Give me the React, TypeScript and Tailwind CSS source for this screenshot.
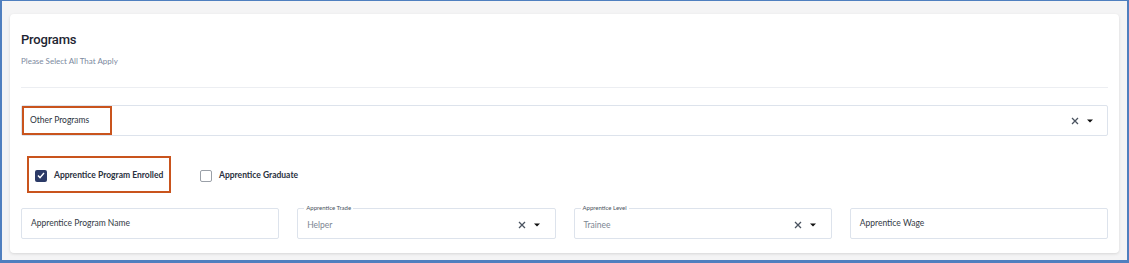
import React from 'react';

const Caret = () => (
  <svg width="6" height="4" viewBox="0 0 6 4" className="fill-[#111]">
    <path d="M0 0.5h6L3 3.5z" />
  </svg>
);

const Clear = () => (
  <svg width="8" height="8" viewBox="0 0 8 8" className="stroke-[#4a5360]" strokeWidth="1.3">
    <path d="M1 1l6 6M7 1L1 7" />
  </svg>
);

const TextBox = ({ placeholder }: { placeholder: string }) => (
  <div className="h-[31px] border border-[#dde3ec] rounded-[2px] flex items-center px-[9px] text-[8.5px] text-[#333a45] bg-white">
    {placeholder}
  </div>
);

const SelectBox = ({ label, value }: { label: string; value: string }) => (
  <div className="relative h-[31px] border border-[#dde3ec] rounded-[2px] flex items-center pl-[9px] pr-[15px] bg-white">
    <span className="absolute -top-[5px] left-[6px] bg-white px-[2px] text-[6px] leading-[8px] text-[#4a5260]">{label}</span>
    <span className="flex-1 text-[8.5px] text-[#7d8693] pt-[3px]">{value}</span>
    <div className="flex items-center gap-[8px] pt-[2px]">
      <Clear />
      <Caret />
    </div>
  </div>
);

const App: React.FC = () => {
  return (
    <div
      className="w-[1129px] h-[263px] bg-[#f4f4f5] border-l-2 border-r-2 border-t border-b-[3px] border-[#4f7fbf] px-[8px] pt-[13px]"
      style={{ fontFamily: 'Lato, "Open Sans", sans-serif' }}
    >
      <div className="bg-white rounded-[4px] shadow-[0_1px_3px_rgba(0,0,0,0.12)] h-[239px] px-[11px] pt-[18px]">
        <h2 className="text-[13px] leading-[16px] font-medium text-[#1e2532] tracking-[-0.2px]" style={{ fontFamily: 'Roboto, sans-serif' }}>
          Programs
        </h2>
        <p className="mt-[8px] text-[8px] leading-[10px] text-[#7d8aa0]">Please Select All That Apply</p>
        <div className="mt-[21px] h-px bg-[#eceef2]" />

        <div className="mt-[17px] h-[31px] border border-[#dde3ec] rounded-[2px] flex items-center pr-[14px]">
          <div className="h-[29px] w-[90px] border-2 border-[#c9541d] flex items-center pl-[6px] text-[8.5px] text-[#2c333e]">
            Other Programs
          </div>
          <div className="flex-1" />
          <div className="flex items-center gap-[8px]">
            <Clear />
            <Caret />
          </div>
        </div>

        <div className="mt-[20px] flex items-center pl-[6px] gap-[29px]">
          <div className="h-[37px] w-[144px] border-2 border-[#c9541d] flex items-center pl-[6px] gap-[7px] pt-[2px]">
            <div className="w-[12px] h-[12px] rounded-[2px] bg-[#2b3a67] flex items-center justify-center">
              <svg width="8" height="7" viewBox="0 0 8 7" fill="none" stroke="white" strokeWidth="1.4">
                <path d="M1 3.6l2 2L7 1" />
              </svg>
            </div>
            <span className="text-[8.5px] font-bold text-[#2a3140]">Apprentice Program Enrolled</span>
          </div>
          <div className="flex items-center gap-[7px] pt-[2px]">
            <div className="w-[12px] h-[12px] rounded-[2px] border border-[#9aa0a8] bg-white" />
            <span className="text-[8.5px] font-bold text-[#2a3140]">Apprentice Graduate</span>
          </div>
        </div>

        <div className="mt-[15px] grid grid-cols-4 gap-[18px]">
          <TextBox placeholder="Apprentice Program Name" />
          <SelectBox label="Apprentice Trade" value="Helper" />
          <SelectBox label="Apprentice Level" value="Trainee" />
          <TextBox placeholder="Apprentice Wage" />
        </div>
      </div>
    </div>
  );
};

export default App;
